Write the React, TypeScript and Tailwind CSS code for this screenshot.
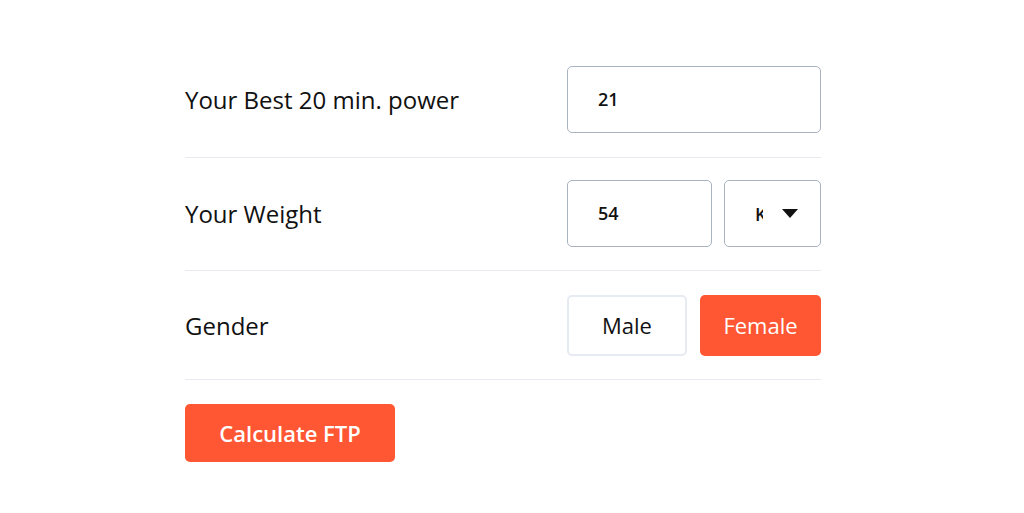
import React from 'react'

export default function App() {
    return (
        <div className="min-h-screen bg-white" style={{ fontFamily: '"Open Sans", sans-serif' }}>
            <div className="ml-[185px] w-[636px] pt-[42px] text-[#111]">
                <div className="flex items-center justify-between border-b border-[#e7eaee] py-6">
                    <span className="text-[24px]">Your Best 20 min. power</span>
                    <div className="flex h-[67px] w-[254px] items-center rounded-[5px] border border-[#a9b3bf] pl-[30px] text-[18px] font-semibold">
                        21
                    </div>
                </div>

                <div className="flex items-center justify-between border-b border-[#e7eaee] pt-[22px] pb-[23px]">
                    <span className="text-[24px]">Your Weight</span>
                    <div className="flex gap-3">
                        <div className="flex h-[67px] w-[145px] items-center rounded-[5px] border border-[#a9b3bf] pl-[30px] text-[18px] font-semibold">
                            54
                        </div>
                        <div className="flex h-[67px] w-[97px] items-center rounded-[5px] border border-[#a9b3bf] pl-[30px] text-[18px] font-semibold">
                            <span className="inline-block w-[8px] overflow-hidden whitespace-nowrap leading-none">K</span>
                            <svg width="16" height="10" viewBox="0 0 16 10" className="ml-[19px]">
                                <path d="M0 0H16L8 9Z" fill="#111" />
                            </svg>
                        </div>
                    </div>
                </div>

                <div className="flex items-center justify-between border-b border-[#e7eaee] pt-6 pb-[23px]">
                    <span className="text-[24px]">Gender</span>
                    <div className="flex gap-[13px]">
                        <button className="h-[61px] w-[120px] rounded-[5px] border-2 border-[#e6eaf1] bg-white text-[22px] font-medium text-[#111]">
                            Male
                        </button>
                        <button className="h-[61px] w-[121px] rounded-[5px] bg-[#ff5733] text-[22px] font-medium text-white">
                            Female
                        </button>
                    </div>
                </div>

                <div className="pt-6">
                    <button className="h-[58px] w-[210px] rounded-[5px] bg-[#ff5733] text-[22px] font-semibold text-white">
                        Calculate FTP
                    </button>
                </div>
            </div>
        </div>
    )
}
